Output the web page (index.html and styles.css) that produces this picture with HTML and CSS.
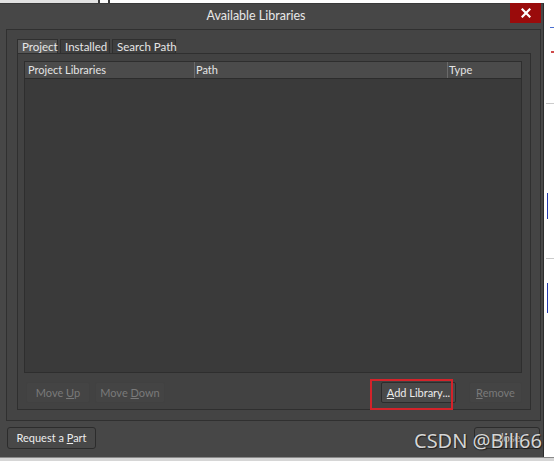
FILE: index.html
```html
<!DOCTYPE html>
<html>
<head>
<meta charset="utf-8">
<link rel="stylesheet" href="styles.css">
</head>
<body>
<div class="screen">
  <div class="topstrip">
    <span class="ts-a"></span><span class="ts-line"></span><span class="ts-b"></span><span class="ts-line"></span><span class="ts-c"></span>
  </div>
  <div class="mid">
    <div class="dialog">
      <div class="titlebar">
        <div class="title">Available Libraries</div>
        <button class="xbtn">
          <svg width="10" height="10" viewBox="0 0 10 10"><path d="M1.5 1.5 L8.5 8.5 M8.5 1.5 L1.5 8.5" stroke="#fff" stroke-width="2.2" stroke-linecap="square"/></svg>
        </button>
      </div>
      <div class="outer">
        <div class="tabs">
          <div class="tab active">Project</div>
          <div class="tab">Installed</div>
          <div class="tab">Search Path</div>
        </div>
        <div class="tabpanel">
          <div class="list">
            <div class="header">
              <div class="col c1">Project Libraries</div>
              <div class="col c2">Path</div>
              <div class="col c3">Type</div>
            </div>
            <div class="listbody"></div>
          </div>
          <div class="btnrow">
            <div class="btn disabled w-up">Move <u>U</u>p</div>
            <div class="btn disabled w-down">Move <u>D</u>own</div>
            <div class="spacer"></div>
            <div class="btn w-add"><u>A</u>dd Library...</div>
            <div class="btn disabled w-rem"><u>R</u>emove</div>
            <div class="mark"></div>
          </div>
        </div>
      </div>
      <div class="footer">
        <div class="btn w-req">Request a <u>P</u>art</div>
        <div class="spacer"></div>
        <div class="btn w-close">Close</div>
      </div>
      <div class="watermark">CSDN @Bill66</div>
    </div>
    <div class="side">
      <span class="sd sd1"></span>
      <span class="sd sd2"></span>
      <span class="sd sd3"></span>
      <span class="sd sd4"></span>
      <span class="sd sd5"></span>
      <span class="sd sd6"></span>
    </div>
  </div>
  <div class="bottomstrip"></div>
</div>
</body>
</html>
```
FILE: styles.css
```css
* { box-sizing: border-box; }
html, body { margin: 0; padding: 0; background: #ffffff; }
.screen {
  width: 554px; height: 461px; overflow: hidden;
  display: flex; flex-direction: column;
  font-family: "Lato", "Noto Sans", sans-serif;
  font-size: 11px; color: #e2e2e2;
  white-space: nowrap;
}
.topstrip { height: 3px; display: flex; flex: none; }
.ts-a { width: 98px; background: #e2e2e2; }
.ts-line { width: 2px; background: #3a3a3a; }
.ts-b { width: 8px; background: #fafafa; }
.ts-c { flex: 1; background: #ffffff; }

.mid { display: flex; height: 454px; flex: none; }
.dialog {
  position: relative;
  width: 544px; height: 454px;
  background: #474747;
  border-top: 1px solid #3a3a3a;
  border-right: 1px solid #2c2c2c;
  display: flex; flex-direction: column;
}
.titlebar { height: 25px; display: flex; align-items: flex-start; flex: none; }
.title {
  flex: 1; text-align: center; line-height: 24px;
  font-size: 12.5px; color: #e8e8e8; padding-left: 2px;
}
.xbtn {
  width: 31px; height: 20px; margin: -1px 2px 0 0; padding: 0; border: none;
  background: #9a0b0b; display: flex; align-items: center; justify-content: center;
}

.outer {
  margin: 0 2px 0 6px; height: 392px; flex: none;
  border: 1px solid #303030; background: #444444;
  padding: 9px 9px 10px 10px;
  display: flex; flex-direction: column;
}
.tabs { display: flex; height: 14px; gap: 2px; flex: none; }
.tab {
  height: 15px; line-height: 14px; padding: 0 4px;
  background: #3e3e3e; border: 1px solid #2f2f2f; border-bottom: none;
  color: #e6e6e6; font-size: 11.5px;
}
.tab.active { background: #565656; width: 41px; }
.tab:nth-child(2) { width: 50px; }
.tab:nth-child(3) { width: 64px; }

.tabpanel {
  flex: 1; border: 1px solid #2f2f2f; background: #424242;
  padding: 7px 8px 5px 6px;
  display: flex; flex-direction: column;
}
.list {
  height: 312px; flex: none; border: 1px solid #2e2e2e; background: #3a3a3a;
  display: flex; flex-direction: column;
}
.header {
  height: 17px; display: flex; background: #4b4b4b;
  border-bottom: 1px solid #2c2c2c; flex: none;
}
.col { line-height: 16px; padding-left: 3px; color: #e4e4e4; }
.c1 { width: 169px; }
.c2 { width: 253px; border-left: 1px solid #6a6a6a; padding-left: 1px; }
.c3 { flex: 1; border-left: 1px solid #6a6a6a; padding-left: 1px; }
.listbody { flex: 1; }

.btnrow { position: relative; display: flex; margin-top: 9px; padding-left: 2px; gap: 5px; }
.spacer { flex: 1; }
.btn {
  height: 21px; line-height: 19px; text-align: center;
  border: 1px solid #2c2c2c; background: #4a4a4a; color: #ececec;
  border-radius: 2px;
}
.btn u { text-decoration: underline; text-underline-offset: 1px; }
.btn.disabled { background: #444444; border-color: #414141; color: #7a7a7a; }
.w-up { width: 64px; }
.w-down { width: 70px; }
.w-add { width: 75px; margin-right: 8px; }
.w-rem { width: 53px; margin-right: 0; }
.mark {
  position: absolute; left: 346px; top: -3px; width: 83px; height: 31px;
  border: 2px solid #d4232a;
}

.footer { display: flex; padding: 6px 3px 0 7px; }
.w-req { width: 89px; height: 22px; line-height: 20px; border-radius: 3px; background: #484848; }
.w-close { width: 66px; height: 22px; line-height: 20px; border-radius: 3px; background: #4c4c4c; color: #cfcfcf; }

.watermark {
  position: absolute; left: 414px; top: 425px;
  font-family: "Noto Sans", sans-serif; font-size: 20px; line-height: 24px;
  color: rgba(255,255,255,0.82);
  text-shadow: 0 0 1px #1f1f1f, 1px 1px 1px rgba(0,0,0,0.5);
}

.side { position: relative; flex: 1; background: #ffffff; }
.sd { position: absolute; display: block; }
.sd1 { left: 6px; top: 24px; width: 4px; height: 1px; background: #4a6fd0; }
.sd2 { left: 7px; top: 48px; width: 3px; height: 2px; background: #d04a4a; }
.sd3 { left: 2px; top: 100px; width: 8px; height: 1px; background: #cccccc; }
.sd4 { left: 3px; top: 190px; width: 1px; height: 26px; background: #2a3fb0; }
.sd5 { left: 2px; top: 255px; width: 8px; height: 1px; background: #cccccc; }
.sd6 { left: 3px; top: 280px; width: 1px; height: 30px; background: #2a3fb0; }
.bottomstrip { flex: 1; background: #d6d6d6; border-top: 1px solid #8a8a8a; }
```
